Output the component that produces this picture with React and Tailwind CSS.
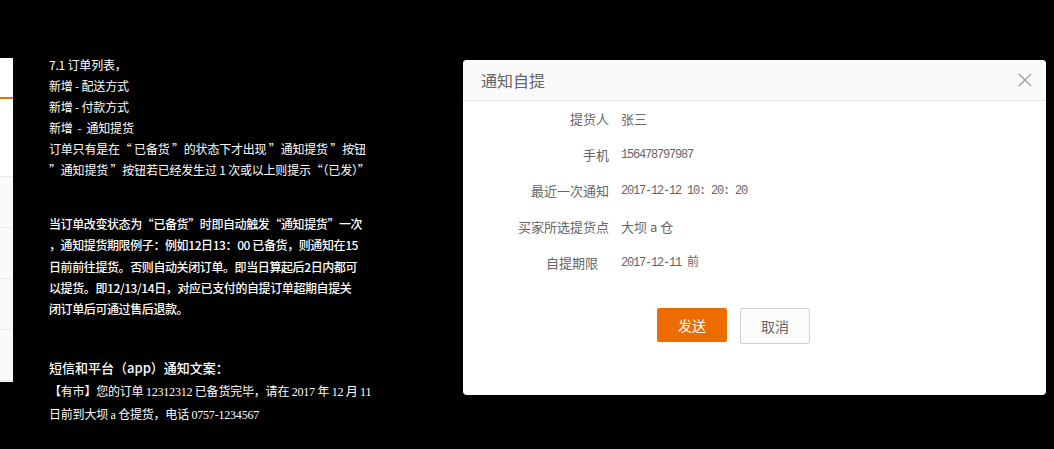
import React from "react";

const CJK = "font-['Noto_Sans_CJK_SC',sans-serif]";
const MONO = "font-['Liberation_Mono','Noto_Sans_CJK_SC',monospace] tracking-[-1.2px]";
const SERIF = "font-['Liberation_Serif',serif]";

const INTRO = [
  "7.1 订单列表，",
  "新增 - 配送方式",
  "新增 - 付款方式",
  "新增  -  通知提货",
  "订单只有是在“ 已备货 ”的状态下才出现 ”通知提货 ”按钮",
  "”通知提货 ”按钮若已经发生过 1 次或以上则提示“（已发）”",
];

const RULES = [
  "当订单改变状态为“已备货”时即自动触发“通知提货”一次",
  "，通知提货期限例子：例如12日13：00 已备货，则通知在15",
  "日前前往提货。否则自动关闭订单。即当日算起后2日内都可",
  "以提货。即12/13/14日，对应已支付的自提订单超期自提关",
  "闭订单后可通过售后退款。",
];

const FIELDS = [
  { label: "提货人", value: "张三", mono: false },
  { label: "手机", value: "156478797987", mono: true },
  { label: "最近一次通知", value: "2017-12-12 10: 20: 20", mono: true },
  { label: "买家所选提货点", value: "大坝 a 仓", mono: false },
  { label: "自提期限", value: "2017-12-11 前", mono: true, pad: true },
];

function SideStrip() {
  return (
    <div className="mt-[58px] flex h-[324px] w-[13px] shrink-0 flex-col bg-white">
      <div className="h-[39px]" />
      <div className="h-[2px] bg-[#ed6c00]" />
      <div className="h-[77px]" />
      {[0, 1, 2, 3].map((i) => (
        <div key={i} className="h-[51px] border-t border-[#e8e8e8] bg-[#fafafa]" />
      ))}
      <div className="flex-1 border-t border-[#e8e8e8] bg-[#fafafa]" />
    </div>
  );
}

function Notes() {
  return (
    <div className={`ml-[36px] pt-[54px] text-white ${CJK}`}>
      <div className="text-[12px] leading-[21px] tracking-[-0.2px]">
        {INTRO.map((line) => (
          <div key={line} className="h-[21px] whitespace-pre">
            {line}
          </div>
        ))}
      </div>
      <div className="mt-[33px] text-[12px] font-medium leading-[21.3px] tracking-[-0.4px]">
        {RULES.map((line) => (
          <div key={line} className="whitespace-pre">
            {line}
          </div>
        ))}
      </div>
      <div className="mt-[37px] leading-[23px]">
        <div className="text-[13px] font-medium">短信和平台（app）通知文案：</div>
        <div className="h-[23px] text-[12px] tracking-[-0.2px]">
          【有市】您的订单 <span className={SERIF}>12312312</span> 已备货完毕，请在{" "}
          <span className={SERIF}>2017</span> 年 <span className={SERIF}>12</span> 月{" "}
          <span className={SERIF}>11</span>
        </div>
        <div className="h-[23px] text-[12px] tracking-[-0.2px]">
          日前到大坝 <span className={SERIF}>a</span> 仓提货，电话{" "}
          <span className={SERIF}>0757-1234567</span>
        </div>
      </div>
    </div>
  );
}

function NoticeDialog() {
  return (
    <div
      className={`absolute left-[463px] top-[60px] flex h-[335px] w-[583px] flex-col overflow-hidden rounded-[4px] bg-white ${CJK}`}
    >
      <div className="flex h-[41px] shrink-0 items-center justify-between border-b border-[#e8e8e8] bg-[#fafafa] pl-[18px] pr-[14px]">
        <span className="text-[16px] text-[#666]">通知自提</span>
        <svg width="14" height="14" viewBox="0 0 14 14" className="text-[#999]">
          <path d="M1 1 L13 13 M13 1 L1 13" stroke="currentColor" strokeWidth="1.2" fill="none" />
        </svg>
      </div>
      <div className="flex flex-col">
        {FIELDS.map(({ label, value, mono, pad }) => (
          <div key={label} className="flex h-[36px] items-center gap-[12px] text-[#666]">
            <div className={`w-[146px] text-right text-[13px] ${pad ? "pr-[11px]" : ""}`}>{label}</div>
            <div className={mono ? `text-[12px] ${MONO}` : "text-[13px]"}>{value}</div>
          </div>
        ))}
      </div>
      <div className="mt-[27px] flex items-start gap-[13px] pl-[194px]">
        <button
          type="button"
          className="h-[34px] w-[70px] rounded-[2px] bg-[#ed6c00] text-[14px] text-white"
        >
          发送
        </button>
        <button
          type="button"
          className="h-[36px] w-[70px] rounded-[2px] border border-[#d0d0d0] bg-[#fcfcfc] text-[14px] text-[#666]"
        >
          取消
        </button>
      </div>
    </div>
  );
}

export default function App() {
  return (
    <div className="relative h-[449px] w-[1054px] overflow-hidden bg-black">
      <div className="flex">
        <SideStrip />
        <Notes />
      </div>
      <NoticeDialog />
    </div>
  );
}
